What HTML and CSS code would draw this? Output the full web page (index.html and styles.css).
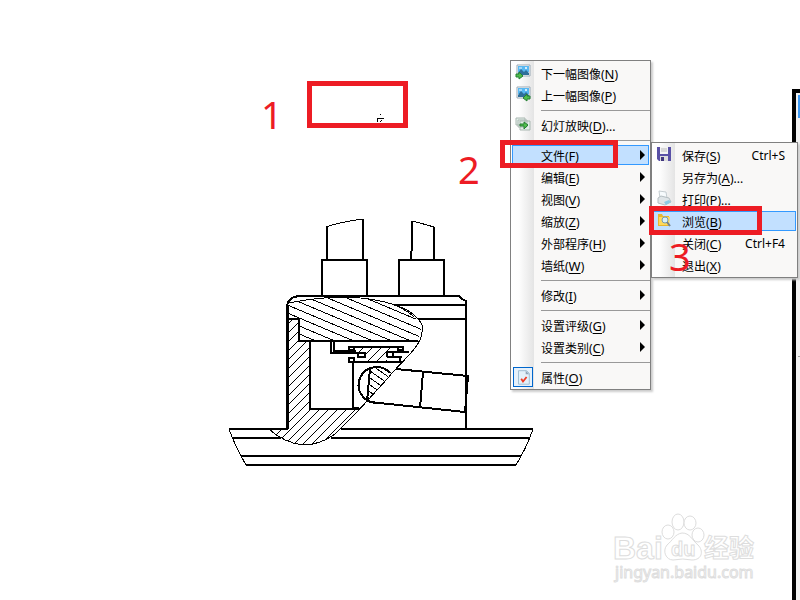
FILE: index.html
```html
<!DOCTYPE html>
<html lang="zh-CN">
<head>
<meta charset="utf-8">
<title>图像查看器</title>
<link rel="stylesheet" href="styles.css">
</head>
<body>
<main class="viewer">
  <svg class="drawing" width="320" height="270" viewBox="220 210 320 270" role="img" aria-label="机械剖面图">
    <defs>
      <pattern id="h1" width="19" height="8" patternUnits="userSpaceOnUse"><path d="M-19-16L38 8M-19-8L38 16M-19 0L38 24"/></pattern>
      <pattern id="h2" width="9" height="9" patternUnits="userSpaceOnUse"><path d="M-2 11L11-2M-2 2L2-2M7 11L11 7"/></pattern>
      <pattern id="h3" width="10" height="7" patternUnits="userSpaceOnUse"><path d="M-10-14L20 7M-10-7L20 14M-10 0L20 21"/></pattern>
    </defs>
    <path fill="url(#h1)" d="M288 304Q320 297 345 297Q375 298 395 305Q422 317 421 332L418 341H299V319H288Z"/>
    <path fill="url(#h2)" d="M288 319H299V341H310V409H359L335 434Q303 458 270 430H288Z"/>
    <path fill="url(#h2)" d="M366 348H396L387 354V362H366V354H358V348Z"/>
    <path fill="url(#h3)" d="M370 369Q381 364 390 374L368 400Z"/>
    <g class="thin">
      <path d="M326 227Q340 222 363 219M412 221Q424 224 434 227"/>
      <path d="M288 303Q320 297 345 297Q375 298 395 305Q416 312 422 325V332C421 348 400 362 388 378L357 412L335 434Q320 445 303 445Q285 443 270 430"/>
      <path d="M229 429Q235 446 246 465M533 429Q527 447 516 465"/>
      <path d="M395 305Q408 311 414 317"/>
    </g>
    <g class="thick">
      <path d="M327 227V260M363 219V260M322 296V260H367V296M412 221V243L411 260M434 227V260M399 296V260H444V296"/>
      <path d="M287 429V306Q288 297 299 296H459Q461 299 466 301V429M394 305H466M418 319H466"/>
      <path d="M287 319H299V341H418M310 341V409H359"/>
      <path d="M229 429H288M341 429H533M232 438H281M331 438H530M241 456H521M246 465H516"/>
      <path d="M353 362V408H359M349 362H402M353 347H404"/>
      <path d="M390 373A18 18 0 1 0 376 403M370 369L367 401M370 402L465 412L468 376L396 369M423 372L420 408"/>
      <path d="M331 341V353H365V357H358V353M334 341V351H356M349 347H354V350H349ZM349 358H354V362H349ZM403 347V350H398V347M387 357V352H409M387 357H400V362M393 352V357H402"/>
    </g>
    <path d="M287 306V429" stroke="#000" stroke-width="3"/>
  </svg>

  <div class="window-edge"><span></span></div>

  <div class="watermark">
    <svg width="150" height="90" viewBox="610 500 150 90" aria-hidden="true">
      <g class="paw">
        <ellipse cx="668" cy="532" rx="6" ry="7"/><ellipse cx="678" cy="522" rx="6" ry="8"/>
        <ellipse cx="690" cy="523" rx="6" ry="7"/><ellipse cx="698" cy="535" rx="6" ry="7"/>
        <path d="M682 533C675 534 673 540 667 545C662 551 666 560 673 560Q683 558 692 560C702 560 704 551 698 545C692 540 690 533 682 533Z"/>
      </g>
      <g class="mark">
        <text class="latin" x="613" y="559">Bai</text><text class="du" x="671" y="556">du</text>
        <text class="han" x="704" y="557">经验</text><text class="site" x="615" y="578">jingyan.baidu.com</text>
      </g>
    </svg>
  </div>

  <div class="menu menu-main" role="menu">
    <button class="item"><svg class="icon" viewBox="0 0 16 16"><g id="photo"><path d="M2 1h13v11H2z" fill="#fff" stroke="#9aa9b5"/><path d="M3 2h11v6H3z" fill="#58b8f2"/><path d="M3 9l3-4 3 3 2-2 3 3v2H3z" fill="#2f6f9a"/><circle cx="11" cy="4" r="1" fill="#fff"/><path d="M4 4h3" stroke="#e9f7ff"/></g><path d="M1 10h3V8l4 4-4 3v-2H1z" class="green"/></svg><span>下一幅图像(<u>N</u>)</span></button>
    <button class="item"><svg class="icon" viewBox="0 0 16 16"><use href="#photo"/><path d="M15 10h-3V8l-4 4 4 3v-2h3z" class="green"/></svg><span>上一幅图像(<u>P</u>)</span></button>
    <hr>
    <button class="item"><svg class="icon" viewBox="0 0 16 16"><path d="M1 2h9v7H1zM3 4h9v7H3zM5 5h10v9H5z" fill="#e4f0ea" stroke="#a9b7b1"/><path d="M5 8h4V6l4 3-4 4v-3H5z" class="green"/></svg><span>幻灯放映(<u>D</u>)...</span></button>
    <hr>
    <button class="item sub active"><span>文件(<u>F</u>)</span></button>
    <button class="item sub"><span>编辑(<u>E</u>)</span></button>
    <button class="item sub"><span>视图(<u>V</u>)</span></button>
    <button class="item sub"><span>缩放(<u>Z</u>)</span></button>
    <button class="item sub"><span>外部程序(<u>H</u>)</span></button>
    <button class="item sub"><span>墙纸(<u>W</u>)</span></button>
    <hr>
    <button class="item sub"><span>修改(<u>I</u>)</span></button>
    <hr>
    <button class="item sub"><span>设置评级(<u>G</u>)</span></button>
    <button class="item sub"><span>设置类别(<u>C</u>)</span></button>
    <hr>
    <button class="item"><svg class="icon checked" viewBox="0 0 20 20"><path d="M5 3h9l3 3v12H5z" fill="#e3f1fa" stroke="#9bbace"/><path d="M13 3v4h4z" fill="#8fa5ba"/><path d="M8 12l2 3 4-5" fill="none" stroke="#ef3b24" stroke-width="2"/></svg><span>属性(<u>O</u>)</span></button>
  </div>

  <div class="menu menu-file" role="menu">
    <button class="item"><svg class="icon" viewBox="0 0 16 16"><path d="M1 1h14v14H3l-2-2z" fill="#5950a6"/><path d="M4 1h8v7H4z" fill="#f4f4f4"/><path d="M5 3h6M5 5h6" stroke="#bbb"/><path d="M4 10h8v5H4z" fill="#ddd"/><path d="M5 11h3v4H5z" fill="#40367e"/></svg><span>保存(<u>S</u>)</span><kbd>Ctrl+S</kbd></button>
    <button class="item"><span>另存为(<u>A</u>)...</span></button>
    <button class="item"><svg class="icon" viewBox="0 0 16 16"><path d="M3 1l7 1 1 6H4z" fill="#f7fbfd" stroke="#c5cdd1"/><path d="M2 8l3-2 8 2 2 4-6 3-7-2z" fill="#dfe5e8" stroke="#b5bec2"/><path d="M8 12l5-2 2 2-5 3z" fill="#8bc9e4"/></svg><span>打印(<u>P</u>)...</span></button>
    <button class="item active"><svg class="icon" viewBox="0 0 16 16"><path d="M2 2h4l1 2h6v10H2z" fill="#e8b72f"/><path d="M3 5h11l-1 8H3z" fill="#ffd95b"/><circle cx="9" cy="8" r="3" fill="#d8f0fa" stroke="#769cb0"/><path d="M11 10l3 4" stroke="#76828a" stroke-width="2"/></svg><span>浏览(<u>B</u>)</span></button>
    <button class="item"><span>关闭(<u>C</u>)</span><kbd>Ctrl+F4</kbd></button>
    <button class="item"><span>退出(<u>X</u>)</span></button>
  </div>

  <svg class="cursor" width="10" height="9" viewBox="0 0 10 9" aria-hidden="true"><path d="M4 0h1v1H4zM1 4h7v1H2v3H1zM5 6h1v1H5zM4 7h1v1H4z"/></svg>
  <div class="frame frame-one"></div><div class="frame frame-two"></div><div class="frame frame-three"></div>
  <span class="step step-one">1</span><span class="step step-two">2</span><span class="step step-three">3</span>
</main>
</body>
</html>
```
FILE: styles.css
```css
* { box-sizing: border-box; }
body { margin: 0; background: #fff; font: 12px/22px "Noto Sans", "Noto Sans CJK SC", sans-serif; }
.viewer { position: relative; min-height: 100vh; overflow: hidden; }
.drawing { position: absolute; left: 220px; top: 210px; fill: none; shape-rendering: crispEdges; }
.drawing pattern path, .thin { stroke: #000; stroke-width: 1; }
.thick { stroke: #000; stroke-width: 2; }
.window-edge { position: absolute; left: 792px; right: 0; top: 89px; bottom: 0; border: solid #000; border-width: 4px 0 0 4px; background: #f0f0f0; }
.window-edge span { display: block; margin: 2px 0 0 2px; height: 23px; background: #3b99f4; }
.window-edge::after { content: ""; position: absolute; left: 2px; right: 0; top: 263px; height: 1px; background: #a0a0a0; }
.watermark { position: absolute; left: 610px; top: 500px; }
.paw, .mark { fill: #fff; stroke: #ddd; stroke-width: 1; }
.mark text { font-family: "Liberation Sans", sans-serif; }
.mark .latin { font-size: 32px; font-weight: bold; }
.mark .du { font-size: 20px; font-weight: bold; }
.mark .han { font: bold 25px "Noto Sans CJK SC", sans-serif; }
.mark .site { font: 16px "Noto Sans", sans-serif; }
.menu { position: absolute; padding-top: 2px; border: 1px solid #808080; background: linear-gradient(90deg, #fff, #fdfdfd 8px, #e4e4e4 23px, #f9f8f7 23px); box-shadow: 2px 2px 2px #ccc; }
.menu-main { left: 510px; top: 60px; width: 141px; }
.menu-file { left: 651px; top: 142px; width: 147px; }
.menu hr { height: 1px; margin: 5px 0 4px 30px; border: 0; background: #999; }
.item { position: relative; display: flex; align-items: center; width: calc(100% - 2px); height: 20px; margin: 0 1px 2px; padding: 2px 10px 0 28px; border: 1px solid transparent; background: none; color: #000; font: inherit; text-align: left; white-space: nowrap; }
.item.active { border-color: #3399ff; background: #c2e0ff; }
.item kbd { margin-left: auto; font: inherit; }
.item u { font-size: 13px; text-underline-offset: 2px; }
.icon { position: absolute; left: 2px; top: 0; width: 16px; height: 16px; }
.icon.checked { left: 0; top: -1px; width: 20px; height: 20px; border: 1px solid #0066cc; background: #e6f1fb; }
.green { fill: #4fbd4c; stroke: #268033; }
.sub::after { content: ""; position: absolute; right: 3px; top: 4px; border: 5px solid transparent; border-left-color: #000; border-right: 0; }
.cursor { position: absolute; left: 376px; top: 114px; }
.frame { position: absolute; border: 5px solid #ed1c24; }
.frame-one { left: 307px; top: 81px; width: 101px; height: 47px; }
.frame-two { left: 500px; top: 140px; width: 118px; height: 28px; }
.frame-three { left: 649px; top: 206px; width: 113px; height: 29px; }
.step { position: absolute; color: #ed1c24; font: 38px/40px "Noto Sans", sans-serif; }
.step-one { left: 261px; top: 94px; }
.step-two { left: 458px; top: 149px; }
.step-three { left: 669px; top: 236px; }
```
